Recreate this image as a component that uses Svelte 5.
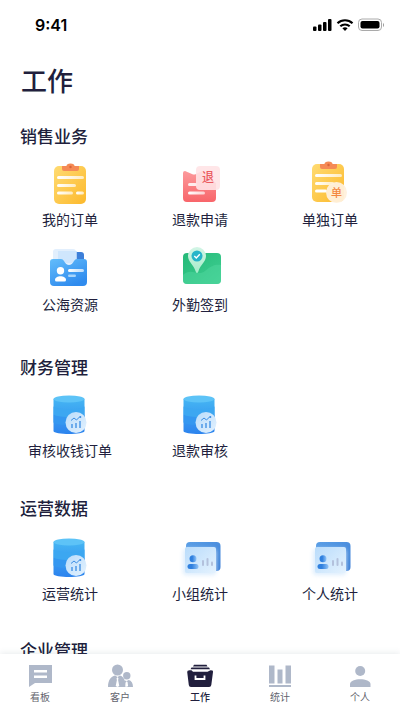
<script>
  const sections = [
    {
      title: '销售业务',
      size: 'wide',
      items: [
        { label: '我的订单', icon: 'orders' },
        { label: '退款申请', icon: 'refund' },
        { label: '单独订单', icon: 'single' },
        { label: '公海资源', icon: 'folder' },
        { label: '外勤签到', icon: 'checkin' }
      ]
    },
    {
      title: '财务管理',
      size: '',
      items: [
        { label: '审核收钱订单', icon: 'data' },
        { label: '退款审核', icon: 'data' }
      ]
    },
    {
      title: '运营数据',
      size: 'low',
      items: [
        { label: '运营统计', icon: 'data' },
        { label: '小组统计', icon: 'card' },
        { label: '个人统计', icon: 'card' }
      ]
    },
    { title: '企业管理', size: '', items: [] }
  ];

  const tabs = [
    { label: '看板', icon: 'board' },
    { label: '客户', icon: 'clients' },
    { label: '工作', icon: 'work' },
    { label: '统计', icon: 'stats' },
    { label: '个人', icon: 'me' }
  ];

  let active = $state('work');
</script>

<svg class="defs" width="0" height="0" aria-hidden="true">
  <defs>
    <linearGradient id="yellow" x1="0" y1="0" x2="1" y2="1">
      <stop offset="0" stop-color="#ffdb72" /><stop offset="1" stop-color="#fcb92c" />
    </linearGradient>
    <linearGradient id="red" x1="0" y1="0" x2="0" y2="1">
      <stop offset="0" stop-color="#fc9a9c" /><stop offset="1" stop-color="#f8656a" />
    </linearGradient>
    <linearGradient id="blue" x1="0" y1="0" x2="0.6" y2="1">
      <stop offset="0" stop-color="#63bdfb" /><stop offset="1" stop-color="#2f8bee" />
    </linearGradient>
    <linearGradient id="green" x1="0" y1="0" x2="1" y2="1">
      <stop offset="0" stop-color="#25b978" /><stop offset="1" stop-color="#3fcf92" />
    </linearGradient>
    <linearGradient id="pin" x1="0" y1="0" x2="0" y2="1">
      <stop offset="0" stop-color="#d3f5e6" /><stop offset="1" stop-color="#a5ecc9" />
    </linearGradient>
    <linearGradient id="drum" x1="0" y1="0" x2="0" y2="1">
      <stop offset="0" stop-color="#45b5f3" /><stop offset="1" stop-color="#2c83ee" />
    </linearGradient>
    <linearGradient id="back" x1="0" y1="0" x2="1" y2="1">
      <stop offset="0" stop-color="#5b9fe6" /><stop offset="1" stop-color="#3c7fd6" />
    </linearGradient>
    <linearGradient id="person" x1="0" y1="0" x2="1" y2="0">
      <stop offset="0.4" stop-color="#2f80df" /><stop offset="1" stop-color="#93c4f6" />
    </linearGradient>
    <linearGradient id="glass" x1="0" y1="0" x2="1" y2="1">
      <stop offset="0" stop-color="#b9dcfb" /><stop offset="1" stop-color="#e4f2fe" />
    </linearGradient>
    <linearGradient id="line" x1="0" y1="0" x2="1" y2="0">
      <stop offset="0" stop-color="#fff" /><stop offset="1" stop-color="#fff" stop-opacity="0.65" />
    </linearGradient>
  </defs>
</svg>

{#snippet clipboard()}
  <rect x="8" y="6" width="32" height="38" rx="5" fill="url(#yellow)" />
  <path d="M16 6h4.500a4 2.500 0 0 1 8 0h4.500v3q0 2-2 2H18q-2 0-2-2z" fill="#f58a55" />
  <circle cx="24.500" cy="7" r="1.200" fill="#d96239" />
  <rect x="11" y="16" width="27" height="3" rx="1.500" fill="url(#line)" />
  <rect x="11" y="24" width="19" height="3" rx="1.500" fill="url(#line)" />
{/snippet}

{#snippet tileIcon(name)}
  <svg class="tile-icon" viewBox="0 0 48 48" aria-hidden="true">
    {#if name === 'orders'}
      {@render clipboard()}
      <rect x="11" y="31.500" width="16" height="3" rx="1.500" fill="url(#line)" />
      <rect x="30" y="31.500" width="8" height="3" rx="1.500" fill="url(#line)" />
    {:else if name === 'refund'}
      <path d="M7 13q0-2 2-2l7 3q2 1 4 0l6-3 14 12v15q0 4-4 4H11q-4 0-4-4z" fill="url(#red)" />
      <rect x="12" y="23" width="9" height="3" rx="1.500" fill="#fff" opacity="0.85" />
      <rect x="12" y="31.500" width="17" height="3" rx="1.500" fill="url(#line)" />
      <rect x="20" y="6" width="24" height="24" rx="4" fill="#ffe3e5" opacity="0.9" />
      <text x="32" y="22" text-anchor="middle" font-size="12" font-weight="500" fill="#ea5a5f">退</text>
    {:else if name === 'single'}
      <g transform="translate(-2 -2)">{@render clipboard()}</g>
      <rect x="9" y="29.500" width="12" height="3" rx="1.500" fill="#fff" />
      <circle cx="30.500" cy="32.500" r="10.500" fill="#fff0dc" opacity="0.95" />
      <text x="30.500" y="36.500" text-anchor="middle" font-size="11" font-weight="500" fill="#f3873f">单</text>
    {:else if name === 'folder'}
      <rect x="27" y="7" width="11" height="14" rx="3" fill="#3d7fd9" />
      <rect x="7" y="4" width="23" height="16" rx="3" fill="#e2effd" />
      <path d="M12 6h19v12H12z" fill="#cbe3fc" opacity="0.8" />
      <path d="M4 17q0-3 3-3h8q2 0 3 2 2 4 5 4t5-4q1-2 3-2h7q3 0 3 3v20q0 4-4 4H8q-4 0-4-4z" fill="url(#blue)" />
      <circle cx="14.500" cy="25.700" r="3.700" fill="#fff" />
      <path d="M9 35c0-5 11-5 11 0q0 1.500-1.500 1.500h-8Q9 36.500 9 35z" fill="#fff" />
      <rect x="22" y="24" width="16" height="3" rx="1.500" fill="url(#line)" />
      <rect x="22" y="29.500" width="8" height="2.500" rx="1.200" fill="#a7d5fb" />
    {:else if name === 'checkin'}
      <rect x="7" y="8" width="38" height="31" rx="4" fill="url(#green)" />
      <path d="M7 30c8-8 15 2 22-4s11-7 16-6v15q0 4-4 4H11q-4 0-4-4z" fill="#54d9a2" opacity="0.45" />
      <path d="M21 28q-1 0-1.500-2C18 20 12 17 12 11a9 9 0 0 1 18 0c0 6-6 9-7.500 15q-.5 2-1.500 2z" fill="url(#pin)" />
      <circle cx="21" cy="11" r="5.500" fill="#25b5c9" />
      <path d="m18.300 11 2 2 3.500-3.700" fill="none" stroke="#fff" stroke-width="1.400" />
    {:else if name === 'data'}
      <path d="M7.500 8v32c0 4 31 4 31 0V8z" fill="url(#drum)" />
      <path d="M7.500 15.500c4 3.500 27 3.500 31 0v8c-4 3.500-27 3.500-31 0z" fill="#3ca7f1" />
      <path d="M7.500 23.500c4 3.500 27 3.500 31 0v8c-4 3.500-27 3.500-31 0z" fill="#3497f0" />
      <ellipse cx="23" cy="8" rx="15.500" ry="3.500" fill="#5dc3f7" />
      <circle cx="30" cy="31.500" r="10.500" fill="url(#glass)" />
      <g fill="none" stroke="#3a8de4" stroke-width="1">
        <path d="m25 29.500 3-2.500 2.500 2 3.500-3.500" />
        <path d="M26 37v-4M30 37v-5M34 37v-7" stroke-width="1.300" />
      </g>
      <circle cx="34.300" cy="26" r="1" fill="#3a8de4" />
    {:else if name === 'card'}
      <rect x="10" y="8" width="34.500" height="29" rx="4" fill="url(#back)" />
      <rect class="halo" x="7" y="15" width="33" height="26" rx="3" fill="#dcedfd" />
      <rect x="9" y="13" width="31" height="26" rx="2" fill="url(#glass)" />
      <circle cx="17" cy="24.700" r="3.500" fill="url(#person)" />
      <rect x="11.500" y="30" width="11" height="5" rx="2.500" fill="url(#person)" />
      <g fill="#b3c1dc">
        <rect x="26" y="26" width="2" height="6" rx="1" />
        <rect x="30.500" y="24" width="2" height="8" rx="1" />
        <rect x="35" y="27.500" width="2" height="4.500" rx="1" />
      </g>
    {/if}
  </svg>
{/snippet}

{#snippet tabIcon(name)}
  <svg class="tab-icon" viewBox="0 0 28 24" fill="currentColor" aria-hidden="true">
    {#if name === 'board'}
      <path fill-rule="evenodd" d="M3 1h23v18H9l-6 4zM8 6v2.500h13V6zm0 5.500V14h13v-2.500z" />
    {:else if name === 'clients'}
      <circle cx="11.500" cy="6" r="5.500" />
      <circle cx="20.800" cy="11.700" r="3.700" />
      <path d="M2 23c0-7 3-10.500 7-11.500l2.500 1.500 2.500-1.500c2.500.7 4.500 3 5 6V23z" />
      <path d="M19.500 23v-4l-1-2.500 2.300.5 2-1c2.500.8 4.200 3 4.200 7z" />
      <path d="m11.500 13 1 1.500-.4 1.500 1.200 6-1.800 1-1.800-1 1.200-6-.4-1.500zM20.800 17l.8 1.200.5 3.800-1.300 1-1.200-1 .4-3.800z" fill="#fff" />
    {:else if name === 'work'}
      <path d="M8 .8h12.500l1 1.700H7zM5.500 3.500h17.500l1 1.700H4.500zM3.500 6.200h2l1.500 1.500h14.500l3-1.500 2 .3q.7.500.5 1.500l-1.700 13q-.3 2-2.200 2H5q-2 0-2.200-2L1.200 8q-.2-1.500 2.300-1.800z" />
      <path d="M9.500 11.500V15h9v-3.500" fill="none" stroke="#fff" stroke-width="1.800" />
    {:else if name === 'stats'}
      <path d="M3 1.500h5.500v18H3zM11.500 5.500h5v14h-5zM19.500 1.500H25v18h-5.500zM3 21h22v2H3z" />
    {:else}
      <circle cx="14.200" cy="7" r="5" />
      <path d="M4 23v-3c0-6.500 20.500-6.500 20.500 0v3z" />
    {/if}
  </svg>
{/snippet}

<div class="app">
  <header class="status">
    <time>9:41</time>
    <svg width="72" height="14" viewBox="0 0 72 14" aria-hidden="true">
      <rect x="1" y="8.500" width="3.500" height="4.500" rx="1" />
      <rect x="6" y="6.500" width="3.500" height="6.500" rx="1" />
      <rect x="11" y="4" width="3.500" height="9" rx="1" />
      <rect x="16" y="1" width="3.500" height="12" rx="1" />
      <g fill="none" stroke="#000" stroke-width="2.200">
        <path d="M25.500 5.200a11 11 0 0 1 15 0M28.300 8.300a7 7 0 0 1 9.400 0" />
      </g>
      <path d="m33 13-2.600-2.700q2.600-2.200 5.200 0z" />
      <rect x="46.500" y="1" width="23" height="11.500" rx="3.500" fill="#fff" stroke="#aaa" />
      <rect x="48.500" y="3" width="19" height="7.500" rx="2" />
      <path d="M71 5v4q1-.7 1-2t-1-2z" fill="#999" />
    </svg>
  </header>

  <main>
    <h1>工作</h1>
    {#each sections as section}
      <section class={section.size}>
        <h2>{section.title}</h2>
        <div class="grid">
          {#each section.items as item}
            <button class="tile" type="button">
              {@render tileIcon(item.icon)}
              <span>{item.label}</span>
            </button>
          {/each}
        </div>
      </section>
    {/each}
  </main>

  <nav>
    {#each tabs as tab}
      <button
        class="tab"
        class:active={active === tab.icon}
        type="button"
        aria-current={active === tab.icon ? 'page' : undefined}
        onclick={() => (active = tab.icon)}
      >
        {@render tabIcon(tab.icon)}
        <span>{tab.label}</span>
      </button>
    {/each}
  </nav>
</div>

<style>
  :global(body) {
    margin: 0;
    background: #fff;
  }
  .defs {
    position: absolute;
  }
  .app {
    display: flex;
    flex-direction: column;
    height: 100vh;
    overflow: hidden;
    background: #fff;
    color: #211f3d;
    font-family: 'Noto Sans CJK SC', 'Noto Sans', sans-serif;
  }
  .status {
    display: flex;
    flex: none;
    align-items: center;
    justify-content: space-between;
    height: 50px;
    padding: 0 16px 0 35px;
  }
  time {
    color: #000;
    font: 600 16px/20px Inter, sans-serif;
  }
  main {
    flex: 1;
    min-height: 0;
    padding-top: 12px;
    overflow-y: auto;
    scrollbar-width: none;
  }
  h1 {
    margin: 0 21px 26px;
    font-size: 26px;
    font-weight: 500;
    line-height: 36px;
  }
  section {
    margin-bottom: 36px;
  }
  section.wide {
    margin-bottom: 41px;
  }
  h2 {
    margin: 0 20px 12px;
    font-size: 17px;
    font-weight: 500;
    line-height: 24px;
  }
  .low h2 {
    margin-bottom: 14px;
  }
  section.low {
    margin-bottom: 35px;
  }
  .grid {
    display: grid;
    grid-template-columns: repeat(3, 1fr);
    row-gap: 16px;
    padding: 0 5px;
  }
  button {
    display: flex;
    flex-direction: column;
    align-items: center;
    margin: 0;
    padding: 0;
    border: 0;
    background: none;
    color: inherit;
    font-family: inherit;
    cursor: pointer;
  }
  .tile {
    gap: 1px;
    font-size: 14px;
    line-height: 20px;
  }
  .tile-icon {
    width: 48px;
    height: 48px;
  }
  .halo {
    filter: blur(2px);
  }
  nav {
    display: flex;
    z-index: 1;
    flex: none;
    height: 56px;
    background: #fff;
    box-shadow: 0 -1px 6px rgba(90, 110, 130, 0.14);
  }
  .tab {
    flex: 1;
    gap: 2px;
    padding-top: 10px;
    color: #afb8c9;
    font-size: 10px;
    line-height: 14px;
  }
  .tab span {
    color: #62636d;
  }
  .tab.active,
  .tab.active span {
    color: #211f3d;
  }
  .tab.active span {
    font-weight: 500;
  }
  .tab-icon {
    width: 28px;
    height: 24px;
  }
</style>
